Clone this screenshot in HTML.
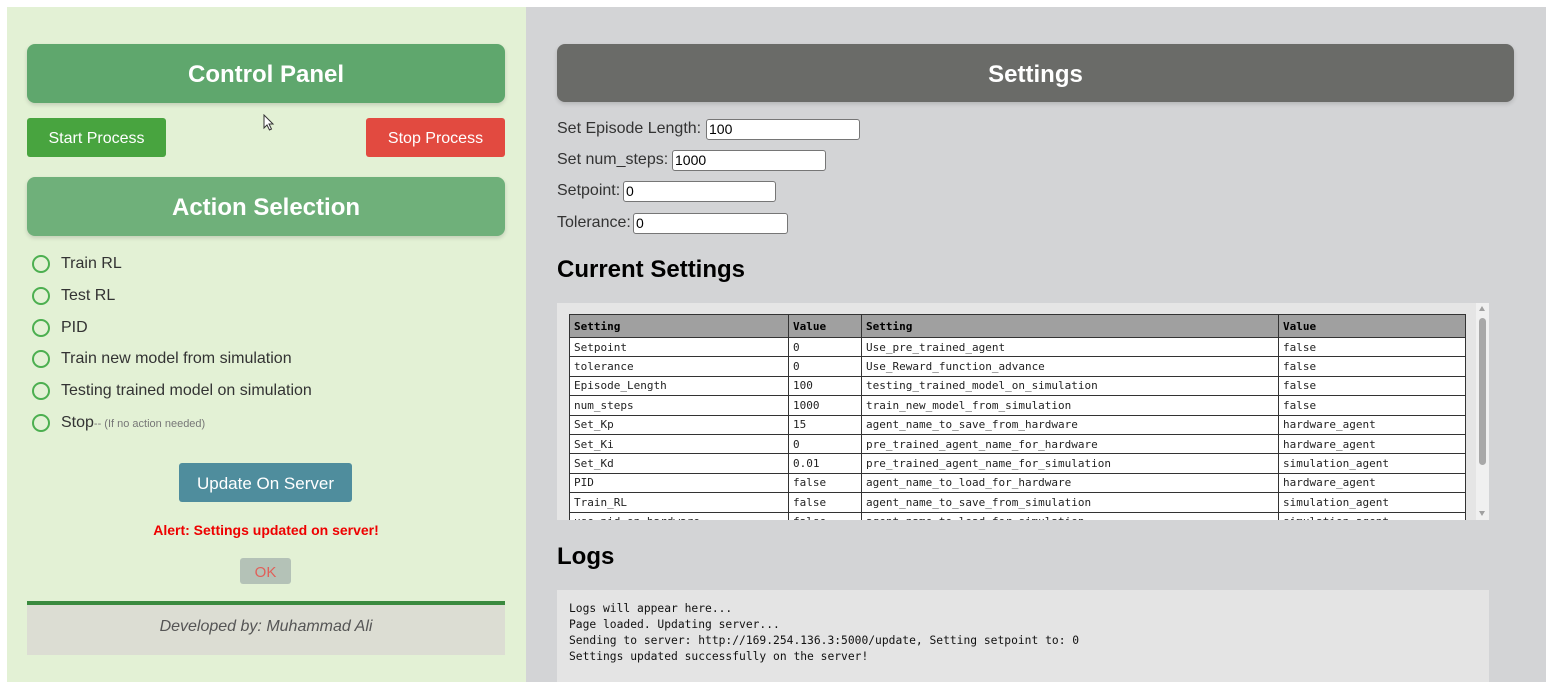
<!DOCTYPE html>
<html><head><meta charset="utf-8"><style>
*{box-sizing:border-box;margin:0;padding:0}
body{width:1550px;height:682px;background:#fff;font-family:"Liberation Sans",Arial,sans-serif;position:relative;overflow:hidden}
.abs{position:absolute}
#left{left:7px;top:7px;width:519px;height:675px;background:#e3f1d5}
#right{left:526px;top:7px;width:1020px;height:675px;background:#d3d4d6}
.hdr{position:absolute;color:#fff;font-weight:bold;font-size:24px;text-align:center;border-radius:8px;box-shadow:0 2px 4px rgba(0,0,0,.15);display:flex;align-items:center;justify-content:center;padding-top:3px}
.btn{position:absolute;color:#fff;font-size:16px;border-radius:3px;display:flex;align-items:center;justify-content:center;padding-top:2px}
.radio{position:absolute;left:32px;width:18px;height:18px;border:2px solid #4caf50;border-radius:50%}
.rl{position:absolute;left:61px;font-size:16px;color:#333}
.lab{position:absolute;left:557px;font-size:16px;color:#333}
.inp{position:absolute;height:21px;background:#fff;border:1px solid #767676;border-radius:3px;font-size:14px;padding-left:2px;line-height:19px;color:#000}
h2{position:absolute;left:557px;font-size:24px;font-weight:bold;color:#000}
table{position:absolute;left:569px;top:314px;width:897px;border-collapse:collapse;font-family:"DejaVu Sans Mono","Liberation Mono",monospace;font-size:11px;color:#222}
td,th{border:1px solid #333;height:19.4px;padding:0 4px;text-align:left;white-space:nowrap;overflow:hidden}
th{background:#a0a0a0;height:23px;font-weight:bold;color:#000}
td{background:#fff}
</style></head><body>
<div id="left" class="abs"></div>
<div id="right" class="abs"></div>

<div class="hdr" style="left:27px;top:44px;width:478px;height:59px;background:#5fa76d">Control Panel</div>
<div class="btn" style="left:27px;top:118px;width:139px;height:39px;background:#48a43f">Start Process</div>
<div class="btn" style="left:366px;top:118px;width:139px;height:39px;background:#e24a40">Stop Process</div>
<div class="hdr" style="left:27px;top:177px;width:478px;height:59px;background:#6fb07a">Action Selection</div>

<div class="radio" style="top:255px"></div><div class="rl" style="top:255px">Train RL</div>
<div class="radio" style="top:287px"></div><div class="rl" style="top:287px">Test RL</div>
<div class="radio" style="top:319px"></div><div class="rl" style="top:319px">PID</div>
<div class="radio" style="top:350px"></div><div class="rl" style="top:350px">Train new model from simulation</div>
<div class="radio" style="top:382px"></div><div class="rl" style="top:382px">Testing trained model on simulation</div>
<div class="radio" style="top:414px"></div><div class="rl" style="top:414px">Stop<span style="font-size:11px;color:#777">-- (If no action needed)</span></div>

<div class="btn" style="left:179px;top:463px;width:173px;height:39px;background:#4f8d9d;font-size:17px">Update On Server</div>
<div class="abs" style="left:27px;top:522px;width:478px;text-align:center;color:#e00;font-weight:bold;font-size:14px">Alert: Settings updated on server!</div>
<div class="btn" style="left:240px;top:558px;width:51px;height:26px;background:#b4c2b7;color:#e0605a;font-size:15px">OK</div>
<div class="abs" style="left:27px;top:601px;width:478px;height:4px;background:#3a8a3e"></div>
<div class="abs" style="left:27px;top:605px;width:478px;height:50px;background:#dcddd3;text-align:center;line-height:44px;font-style:italic;font-size:16px;color:#555">Developed by: Muhammad Ali</div>

<div class="hdr" style="left:557px;top:44px;width:957px;height:58px;background:#6a6b68">Settings</div>
<div class="lab" style="top:120px">Set Episode Length:</div><div class="inp" style="left:706px;top:119px;width:154px">100</div>
<div class="lab" style="top:151px">Set num_steps:</div><div class="inp" style="left:672px;top:150px;width:154px">1000</div>
<div class="lab" style="top:182px">Setpoint:</div><div class="inp" style="left:623px;top:181px;width:153px">0</div>
<div class="lab" style="top:214px">Tolerance:</div><div class="inp" style="left:633px;top:213px;width:155px">0</div>

<h2 style="top:256px">Current Settings</h2>
<div class="abs" style="left:557px;top:303px;width:932px;height:217px;background:#e5e5e5;overflow:hidden">
<table style="left:12px;top:11px">
<tr><th style="width:219px">Setting</th><th style="width:73px">Value</th><th style="width:417px">Setting</th><th>Value</th></tr>
<tr><td>Setpoint</td><td>0</td><td>Use_pre_trained_agent</td><td>false</td></tr>
<tr><td>tolerance</td><td>0</td><td>Use_Reward_function_advance</td><td>false</td></tr>
<tr><td>Episode_Length</td><td>100</td><td>testing_trained_model_on_simulation</td><td>false</td></tr>
<tr><td>num_steps</td><td>1000</td><td>train_new_model_from_simulation</td><td>false</td></tr>
<tr><td>Set_Kp</td><td>15</td><td>agent_name_to_save_from_hardware</td><td>hardware_agent</td></tr>
<tr><td>Set_Ki</td><td>0</td><td>pre_trained_agent_name_for_hardware</td><td>hardware_agent</td></tr>
<tr><td>Set_Kd</td><td>0.01</td><td>pre_trained_agent_name_for_simulation</td><td>simulation_agent</td></tr>
<tr><td>PID</td><td>false</td><td>agent_name_to_load_for_hardware</td><td>hardware_agent</td></tr>
<tr><td>Train_RL</td><td>false</td><td>agent_name_to_save_from_simulation</td><td>simulation_agent</td></tr>
<tr><td>use_pid_on_hardware</td><td>false</td><td>agent_name_to_load_for_simulation</td><td>simulation_agent</td></tr>
</table>
<div class="abs" style="left:919px;top:0;width:13px;height:217px;background:#f0f0f0"></div>
<div class="abs" style="left:922px;top:15px;width:7px;height:147px;background:#a8a8a8;border-radius:4px"></div>
<div class="abs" style="left:922px;top:3px;width:0;height:0;border-left:3.5px solid transparent;border-right:3.5px solid transparent;border-bottom:5px solid #a0a0a0"></div>
<div class="abs" style="left:922px;top:208px;width:0;height:0;border-left:3.5px solid transparent;border-right:3.5px solid transparent;border-top:5px solid #a0a0a0"></div>
</div>

<h2 style="top:543px">Logs</h2>
<div class="abs" style="left:557px;top:590px;width:932px;height:92px;background:#e4e4e4;padding:11px 0 0 12px;font-family:'DejaVu Sans Mono','Liberation Mono',monospace;font-size:11.3px;line-height:16px;color:#111;white-space:pre">Logs will appear here...
Page loaded. Updating server...
Sending to server: http://169.254.136.3:5000/update, Setting setpoint to: 0
Settings updated successfully on the server!</div>

<svg class="abs" style="left:263px;top:114px" width="12" height="18" viewBox="0 0 12 18"><path d="M1 1 L1 14 L4 11 L6.5 16 L8.5 15 L6 10 L10 10 Z" fill="#fff" stroke="#333" stroke-width="1"/></svg>
</body></html>
